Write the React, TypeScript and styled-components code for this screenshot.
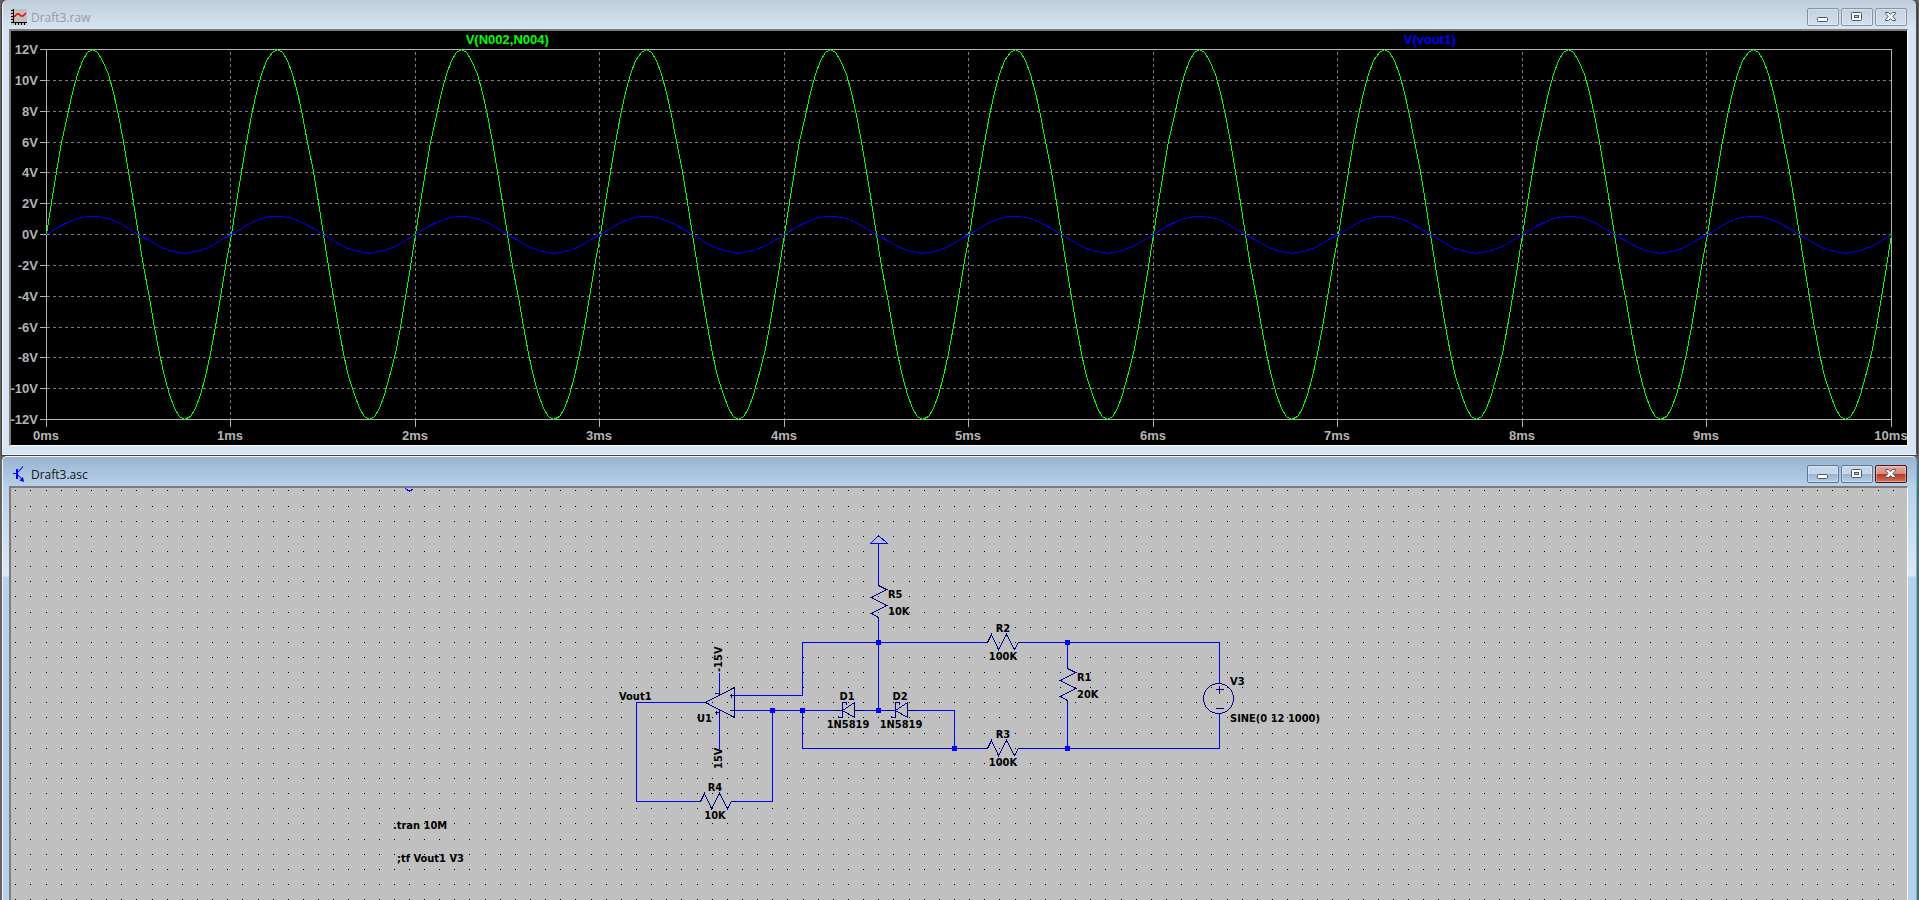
import React, { useLayoutEffect, useRef, useState } from "react";
import styled, { createGlobalStyle, css } from "styled-components";

const GlobalStyle = createGlobalStyle`
  * { box-sizing: border-box; }
  html, body, #root { height: 100%; }
  body {
    margin: 0;
    overflow: hidden;
    background: #646464;
    font-family: "Open Sans", "Noto Sans", sans-serif;
  }
`;

const Desktop = styled.main`
  display: flex;
  flex-direction: column;
  height: 100%;
  padding: 0 2px;
`;

const WindowFrame = styled.section<{ $active?: boolean }>`
  display: flex;
  flex-direction: column;
  border: 1px solid #f4f8fc;
  ${(p) =>
    p.$active
      ? css`
          flex: 1;
          min-height: 0;
          margin-top: 1px;
          border-right-color: #3cc8f0;
          border-bottom: 0;
          border-radius: 5px 5px 0 0;
          padding: 0 8px 0 6px;
          background:
            linear-gradient(#99b4d1, #b9d1ea) 0 0 / 100% 30px no-repeat,
            linear-gradient(#b9d1ea 30px, #dce8f5 119px, #b9d1ea 120px);
        `
      : css`
          flex: none;
          border-top: 0;
          border-right-color: #505050;
          border-radius: 5px 5px 0 0;
          padding: 0 8px 8px 6px;
          outline: 1px solid #404040;
          background:
            linear-gradient(#bfcddb, #d7e4f2) 0 0 / 100% 29px no-repeat,
            #d7e4f2;
        `}
`;

const TitleBar = styled.header`
  display: flex;
  align-items: center;
  gap: 4px;
  flex: none;
  height: 29px;
  padding: 5px 1px 0 2px;
`;

const Title = styled.h2<{ $active?: boolean }>`
  flex: 1;
  margin: 0;
  padding-top: 2px;
  font-size: 12px;
  line-height: 16px;
  font-weight: 400;
  color: ${(p) => (p.$active ? "#101418" : "#9a9a9a")};
`;

const Controls = styled.div`
  display: flex;
  gap: 2px;
`;

const tones = {
  idle: { edge: "#8293ab", fill: "linear-gradient(#c3d1e0, #d3e0ee)" },
  normal: { edge: "#5f7590", fill: "linear-gradient(#c4d8ec 48%, #9ab4d0 52%, #b6cde6)" },
  close: { edge: "#4c1220", fill: "linear-gradient(#e8a99c 0, #d98a7c 48%, #b8391f 52%, #d0735c)" },
};

const ControlButton = styled.button<{ $tone: keyof typeof tones }>`
  display: flex;
  align-items: center;
  justify-content: center;
  width: 32px;
  height: 18px;
  padding: 0 1px 1px 0;
  border: 1px solid ${(p) => tones[p.$tone].edge};
  border-radius: 2px;
  background: ${(p) => tones[p.$tone].fill};
  box-shadow: inset 0 0 0 1px rgba(255, 255, 255, 0.35);
`;

const Client = styled.div<{ $fill?: boolean }>`
  overflow: hidden;
  border-style: solid;
  border-width: 2px 1px 1px 2px;
  border-color: #7c7c7c #fff #fff #7c7c7c;
  ${(p) =>
    p.$fill
      ? css`
          flex: 1;
          min-height: 0;
          border-bottom: 0;
          background: #c0c0c0;
        `
      : css`
          background: #000;
        `}
`;

const Drawing = styled.svg`
  display: block;
  width: 100%;
`;

const AxisText = styled.text`
  font: bold 13px "Liberation Sans", Arial, sans-serif;
`;

const PartText = styled.text`
  font: bold 11px "DejaVu Sans Condensed", Tahoma, sans-serif;
  fill: #000;
`;

function useWidth() {
  const ref = useRef<HTMLDivElement>(null);
  const [width, setWidth] = useState(1200);
  useLayoutEffect(() => {
    const el = ref.current;
    if (!el) return;
    const update = () => setWidth(el.clientWidth);
    update();
    const observer = new ResizeObserver(update);
    observer.observe(el);
    return () => observer.disconnect();
  }, []);
  return [ref, width] as const;
}

const glyphs = {
  minimize: (
    <rect x="2.5" y="6.5" width="10" height="4" rx="1" fill="#fff" stroke="#4d5566" />
  ),
  restore: (
    <>
      <rect x="2.5" y="1.5" width="10" height="8" rx="1" fill="#fff" stroke="#4d5566" />
      <rect x="5.5" y="4.5" width="4" height="2" fill="#b8c8dc" stroke="#4d5566" />
    </>
  ),
  close: (
    <path
      d="M2.5 1.5H5.5L7.5 3.5L9.5 1.5H12.5V2.5L9.8 5.5L12.5 8.5V9.5H9.5L7.5 7.5L5.5 9.5H2.5V8.5L5.2 5.5L2.5 2.5Z"
      fill="#fff"
      stroke="#4d5566"
    />
  ),
};

function WindowControls({ active }: { active?: boolean }) {
  return (
    <Controls>
      {(["minimize", "restore", "close"] as const).map((name) => (
        <ControlButton
          key={name}
          type="button"
          aria-label={name}
          $tone={!active ? "idle" : name === "close" ? "close" : "normal"}
        >
          <svg width="15" height="12" viewBox="0 0 15 12" aria-hidden="true">
            {glyphs[name]}
          </svg>
        </ControlButton>
      ))}
    </Controls>
  );
}

const WaveIcon = () => (
  <svg width="16" height="16" viewBox="0 0 16 16" shapeRendering="crispEdges" aria-hidden="true">
    <rect width="16" height="16" fill="#c0c0c0" />
    <path
      d="M2.5 0V14M0 13.5H16M0 1.5H2M0 4.5H2M0 7.5H2M0 10.5H2M4.5 14V16M7.5 14V16M10.5 14V16M13.5 14V16"
      stroke="#000"
      fill="none"
    />
    <path
      d="M3 8L6 5H8L10 7H12L15 4"
      stroke="#f00"
      strokeWidth="1.6"
      fill="none"
      shapeRendering="auto"
    />
  </svg>
);

const TransistorIcon = () => (
  <svg width="16" height="16" viewBox="0 0 16 16" aria-hidden="true">
    <path d="M2 7.5H6M7 6L12 0.5M7 9L12 14.5" stroke="#00f" strokeWidth="1.1" fill="none" />
    <path d="M6 3V13" stroke="#00f" strokeWidth="2" />
    <path d="M13 16L8.5 14.5L12 11Z" fill="#00f" />
  </svg>
);

const PLOT = { left: 35, right: 16, top: 18, height: 370, total: 414 };
const STEPS_PER_CYCLE = 36;

function sinePoints(width: number, amplitude: number) {
  const mid = PLOT.top + PLOT.height / 2;
  const count = STEPS_PER_CYCLE * 10;
  return Array.from({ length: count + 1 }, (_, i) => {
    const x = PLOT.left + (width * i) / count;
    const y = mid - (amplitude / 24) * PLOT.height * Math.sin((2 * Math.PI * i) / STEPS_PER_CYCLE);
    return `${Math.round(x)},${Math.round(y)}`;
  }).join(" ");
}

function WaveformPlot() {
  const [ref, total] = useWidth();
  const width = total - PLOT.left - PLOT.right;
  const bottom = PLOT.top + PLOT.height;
  const right = PLOT.left + width;
  const volts = Array.from({ length: 13 }, (_, i) => 12 - 2 * i);
  const times = Array.from({ length: 11 }, (_, i) => i);
  const xAt = (ms: number) => Math.floor(PLOT.left + (width * ms) / 10);
  const yAt = (v: number) => Math.round(PLOT.top + ((12 - v) / 24) * PLOT.height);
  return (
    <Client ref={ref}>
      <Drawing height={PLOT.total} role="img" aria-label="Waveforms">
        <g transform="translate(.5 .5)" shapeRendering="crispEdges" fill="none">
          <g stroke="#7c7c7c" strokeDasharray="3 3">
            {volts.slice(1, -1).map((v) => (
              <path key={v} d={`M${PLOT.left} ${yAt(v)}H${right}`} />
            ))}
            {times.slice(1, -1).map((t) => (
              <path key={t} d={`M${xAt(t)} ${PLOT.top + 2}V${bottom}`} />
            ))}
          </g>
          <g stroke="#b4b4b4">
            <rect x={PLOT.left} y={PLOT.top} width={width} height={PLOT.height} />
            {volts.map((v) => (
              <path key={v} d={`M${PLOT.left - 7} ${yAt(v)}h7`} />
            ))}
            {times.map((t) => (
              <path key={t} d={`M${xAt(t)} ${bottom}v7`} />
            ))}
          </g>
          <polyline points={sinePoints(width, 12)} stroke="#0f0" />
          <polyline points={sinePoints(width, 1.2)} stroke="#00f" />
        </g>
        {volts.map((v) => (
          <AxisText key={v} x={PLOT.left - 8} y={yAt(v) + 5} textAnchor="end" fill="#b4b4b4">
            {v}V
          </AxisText>
        ))}
        {times.map((t) => (
          <AxisText key={t} x={xAt(t)} y={bottom + 21} textAnchor="middle" fill="#b4b4b4">
            {t}ms
          </AxisText>
        ))}
        <AxisText x={PLOT.left + width / 4} y="13" textAnchor="middle" fill="#0f0">
          V(N002,N004)
        </AxisText>
        <AxisText x={PLOT.left + (width * 3) / 4} y="13" textAnchor="middle" fill="#00f">
          V(vout1)
        </AxisText>
      </Drawing>
    </Client>
  );
}

const GRID = 15.14;

function gridDots(width: number, height: number) {
  let d = "";
  for (let y = 2.9; y < height; y += GRID)
    for (let x = 4.8; x < width; x += GRID) d += `M${Math.floor(x)} ${Math.floor(y)}h1v1h-1z`;
  return d;
}

const ResistorH = ({ x, y }: { x: number; y: number }) => (
  <path d={`M${x - 3} ${y}h4l4 -8l7 15l8 -15l8 15l4 -7h4`} />
);

const ResistorV = ({ x, y }: { x: number; y: number }) => (
  <path d={`M${x} ${y - 3}v3l8 4l-15 8l15 8l-15 8l7 4v3`} />
);

const Diode = ({ x, y }: { x: number; y: number }) => (
  <path
    d={`M${x - 9} ${y}h9M${x + 12} ${y}h9M${x} ${y}l12 -8v15zM${x + 4} ${y - 6}v-2h-4v15h-4v-2`}
  />
);

const wires = [
  "M705 702H636V801H698",
  "M734 695H802V642H985",
  "M1020 642H1219V683",
  "M1219 713V748H1020",
  "M734 710H833",
  "M772 710V801H733",
  "M802 710V748H985",
  "M863 710H887",
  "M916 710H954V748",
  "M878 543V582",
  "M878 619V710",
  "M1067 642V665",
  "M1067 702V748",
  "M719 672V688M719 716V748",
  "M878 535L870 543H887Z",
  "M405 488L409 491L413 488",
];

const joints = [
  [878, 642],
  [772, 710],
  [802, 710],
  [878, 710],
  [954, 748],
  [1067, 642],
  [1067, 748],
];

type Label = { x: number; y: number; text: string; centred?: boolean };

const labels: Label[] = [
  { x: 619, y: 700, text: "Vout1" },
  { x: 697, y: 722, text: "U1" },
  { x: 715, y: 791, text: "R4", centred: true },
  { x: 715, y: 819, text: "10K", centred: true },
  { x: 847, y: 700, text: "D1", centred: true },
  { x: 848, y: 728, text: "1N5819", centred: true },
  { x: 900, y: 700, text: "D2", centred: true },
  { x: 901, y: 728, text: "1N5819", centred: true },
  { x: 888, y: 598, text: "R5" },
  { x: 888, y: 615, text: "10K" },
  { x: 1003, y: 632, text: "R2", centred: true },
  { x: 1003, y: 660, text: "100K", centred: true },
  { x: 1003, y: 738, text: "R3", centred: true },
  { x: 1003, y: 766, text: "100K", centred: true },
  { x: 1077, y: 681, text: "R1" },
  { x: 1077, y: 698, text: "20K" },
  { x: 1230, y: 685, text: "V3" },
  { x: 1230, y: 722, text: "SINE(0 12 1000)" },
  { x: 393, y: 829, text: ".tran 10M" },
  { x: 397, y: 862, text: ";tf Vout1 V3" },
];

function Schematic() {
  const [ref, width] = useWidth();
  return (
    <Client $fill ref={ref}>
      <Drawing height="1000" role="img" aria-label="Schematic">
        <path d={gridDots(width, 1000)} fill="#000" shapeRendering="crispEdges" />
        <g transform="translate(-10.5 -487.5)" shapeRendering="crispEdges" fill="none">
          <g stroke="#00f">
            {wires.map((d) => (
              <path key={d} d={d} />
            ))}
          </g>
          <g stroke="#000080">
            <ResistorH x={699} y={801} />
            <ResistorH x={986} y={642} />
            <ResistorH x={986} y={748} />
            <ResistorV x={878} y={585} />
            <ResistorV x={1067} y={668} />
            <Diode x={842} y={710} />
            <Diode x={895} y={710} />
            <path d="M705 702L734 687V717Z" />
            <path d="M719 688V694M719 709V716" />
            <path d="M729 695H733M731 693V697M729 710H733M714 693H718M714 712H718M716 710V714" />
            <circle cx="1218" cy="698" r="15" />
            <path d="M1215 689H1223M1219 685V693M1215 708H1223" />
          </g>
          <g fill="#00f">
            {joints.map(([x, y]) => (
              <path key={`${x}-${y}`} d={`M${x - 2.5} ${y - 2.5}h5v5h-5z`} />
            ))}
          </g>
        </g>
        <g transform="translate(-11 -488)">
          {labels.map((l) => (
            <PartText
              key={`${l.x}-${l.y}`}
              x={l.x}
              y={l.y}
              textAnchor={l.centred ? "middle" : "start"}
            >
              {l.text}
            </PartText>
          ))}
          <PartText transform="translate(722 672) rotate(-90)">-15V</PartText>
          <PartText transform="translate(722 769) rotate(-90)">15V</PartText>
        </g>
      </Drawing>
    </Client>
  );
}

export default function App() {
  return (
    <>
      <GlobalStyle />
      <Desktop>
        <WindowFrame>
          <TitleBar>
            <WaveIcon />
            <Title>Draft3.raw</Title>
            <WindowControls />
          </TitleBar>
          <WaveformPlot />
        </WindowFrame>
        <WindowFrame $active>
          <TitleBar>
            <TransistorIcon />
            <Title $active>Draft3.asc</Title>
            <WindowControls active />
          </TitleBar>
          <Schematic />
        </WindowFrame>
      </Desktop>
    </>
  );
}
